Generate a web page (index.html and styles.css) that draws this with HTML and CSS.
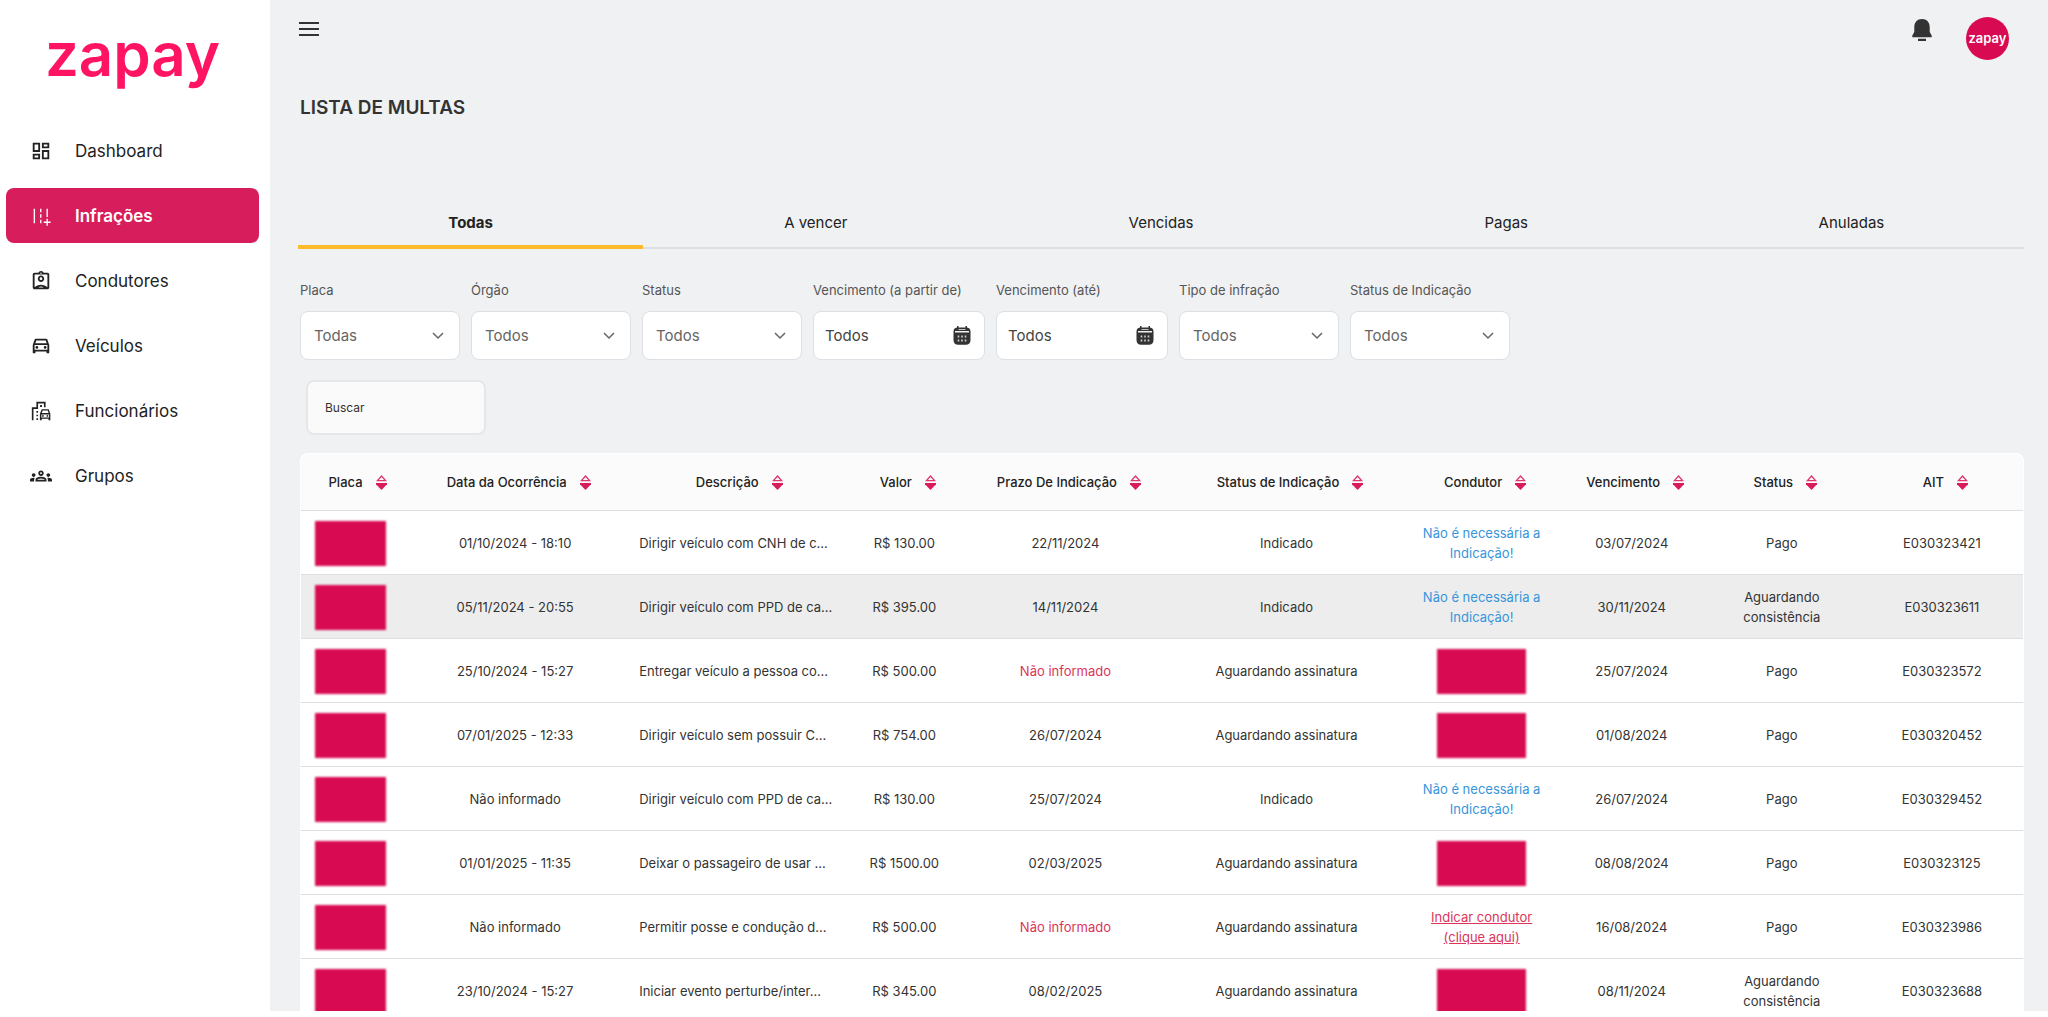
FILE: index.html
```html
<!DOCTYPE html>
<html lang="pt-BR">
<head>
<meta charset="utf-8">
<meta name="viewport" content="width=device-width, initial-scale=1">
<title>Zapay - Lista de multas</title>
<link rel="stylesheet" href="styles.css">
</head>
<body>
<svg class="sprite" aria-hidden="true">
  <symbol id="sort" viewBox="0 0 11 15"><path d="M5.500 1 9.700 5.700H1.300Z" fill="none" stroke="#e0366f" stroke-width="1.300"/><path d="M0 8h11v1.200L5.500 15 0 9.200Z" fill="#d81b5c"/></symbol>
  <symbol id="chevron" viewBox="0 0 12 8"><path d="m1 1 5 5 5-5" fill="none" stroke="#666" stroke-width="1.500"/></symbol>
  <symbol id="calendar" viewBox="0 0 18 19"><path fill="#333" d="M4 0h1.500v1.500h7V0H14v1.600c2.400.2 3.500 1.700 3.500 4V14c0 3-1.600 4.700-4.700 4.700H5.200C2.100 18.700.5 17 .5 14V5.600c0-2.300 1.100-3.800 3.500-4Z"/><path fill="#f0f1f3" d="M5.500 3h7v.8h-7ZM2 5h14v1.500H2Z"/><path fill="#ccc" d="M4.700 9.500h1.600v2H4.700Zm3.500 0h1.600v2H8.200Zm3.500 0h1.600v2h-1.600Zm-7 4h1.600v2H4.700Zm3.500 0h1.600v2H8.200Zm3.500 0h1.600v2h-1.600Z"/></symbol>
</svg>
<div class="app">
  <aside class="sidebar">
    <a class="logo" href="#">zapay</a>
    <nav class="menu">
      <a class="menu-item" href="#"><svg viewBox="0 0 24 24"><path d="M19 5v2h-4V5h4M9 5v6H5V5h4m10 8v6h-4v-6h4M9 17v2H5v-2h4M21 3h-8v6h8V3zM11 3H3v10h8V3zm10 8h-8v10h8V11zm-10 4H3v6h8v-6z"/></svg>Dashboard</a>
      <a class="menu-item active" href="#"><svg viewBox="0 0 24 24"><path d="M4 4h1.500v16H4zM11 4h1.500v4H11zm0 6h1.500v4H11zm0 6h1.500v4H11zM18 4h1.500v9H18zM18 15h1.500v3h3v1.500h-3v3H18v-3h-3V18h3z"/></svg>Infrações</a>
      <a class="menu-item" href="#"><svg viewBox="0 0 24 24"><path d="M19 3h-4.180C14.400 1.840 13.300 1 12 1s-2.400.84-2.820 2H5c-1.100 0-2 .9-2 2v14c0 1.100.9 2 2 2h14c1.100 0 2-.9 2-2V5c0-1.100-.9-2-2-2zm-7-.25c.41 0 .75.340.75.750s-.34.750-.75.750-.75-.34-.75-.75.34-.75.750-.75zM9.100 19c.85-.6 1.900-.95 2.900-.95s2.050.35 2.900.95H9.100zm9.900-.14c-1.770-1.720-4.240-2.790-7-2.790s-5.230 1.070-7 2.790V5h14v13.860zM12 6c-1.930 0-3.500 1.570-3.500 3.500S10.070 13 12 13s3.500-1.570 3.500-3.500S13.930 6 12 6zm0 5c-.83 0-1.500-.67-1.500-1.500S11.170 8 12 8s1.500.67 1.500 1.500S12.830 11 12 11z"/></svg>Condutores</a>
      <a class="menu-item" href="#"><svg viewBox="0 0 24 24"><path d="M18.920 5.010C18.720 4.420 18.160 4 17.500 4h-11c-.66 0-1.210.42-1.420 1.010L3 11v8c0 .55.450 1 1 1h1c.55 0 1-.45 1-1v-1h12v1c0 .55.450 1 1 1h1c.55 0 1-.45 1-1v-8l-2.080-5.990zM6.850 6h10.290l1.040 3H5.810l1.040-3zM19 16H5v-5h14v5z"/><circle cx="7.500" cy="13.500" r="1.500"/><circle cx="16.500" cy="13.500" r="1.500"/></svg>Veículos</a>
      <a class="menu-item" href="#"><svg viewBox="0 0 24 24"><path d="M2 22V8h5V2h10v6h-1.800V3.800H8.800v6h-5V22zM11 5.500h2v2h-2zM7 12h1.800v1.800H7zm0 4h1.800v1.800H7zm0 4h1.800v1.800H7z"/><path fill-rule="evenodd" d="m12.800 10h7.600l1.800 5v7h-2v-1.500h-7.400V22h-2v-7zm1 1.500-.9 2.700h7.400l-.9-2.700zM12.400 15.700v3.400h8.400v-3.400z"/><circle cx="14.100" cy="17.400" r="1"/><circle cx="19" cy="17.400" r="1"/></svg>Funcionários</a>
      <a class="menu-item" href="#"><svg viewBox="0 0 24 24"><path d="M4 13c1.100 0 2-.9 2-2s-.9-2-2-2-2 .9-2 2 .9 2 2 2zm1.130 1.100C4.760 14.040 4.390 14 4 14c-.99 0-1.930.21-2.780.58C.48 14.900 0 15.620 0 16.430V18h4.500v-1.610c0-.83.230-1.610.63-2.290zM20 13c1.100 0 2-.9 2-2s-.9-2-2-2-2 .9-2 2 .9 2 2 2zm4 3.430c0-.81-.48-1.530-1.220-1.850-.85-.37-1.790-.58-2.780-.58-.39 0-.76.040-1.130.1.400.68.630 1.460.63 2.290V18H24v-1.570zm-7.760-2.780c-1.170-.52-2.610-.9-4.240-.9s-3.070.39-4.240.9C6.680 14.130 6 15.210 6 16.390V18h12v-1.610c0-1.180-.68-2.260-1.760-2.740zM8.070 16c.09-.23.130-.39.910-.69.970-.38 1.990-.56 3.020-.56s2.050.18 3.020.56c.77.300.81.460.91.690H8.070zM12 8c.55 0 1 .45 1 1s-.45 1-1 1-1-.45-1-1 .45-1 1-1m0-2c-1.660 0-3 1.340-3 3s1.340 3 3 3 3-1.340 3-3-1.340-3-3-3z"/></svg>Grupos</a>
    </nav>
  </aside>

  <main class="content">
    <header class="topbar">
      <button class="icon-button burger" aria-label="Menu"><svg viewBox="0 0 20 14"><path d="M0 1h20M0 7h20M0 13h20" stroke="#333" stroke-width="2"/></svg></button>
      <div class="account">
        <button class="icon-button bell" aria-label="Notificações"><svg viewBox="0 0 20 22"><path fill="#333" d="M10 0c4.700 0 7.700 3.400 7.700 7.800V13l2 3.500v1.700H.3v-1.700l2-3.500V7.800C2.300 3.400 5.300 0 10 0ZM6 19.800h8V22H6Z"/></svg></button>
        <a class="avatar" href="#">zapay</a>
      </div>
    </header>

    <h1 class="title">LISTA DE MULTAS</h1>

    <div class="tabs" role="tablist">
      <button class="tab selected" role="tab" aria-selected="true">Todas</button>
      <button class="tab" role="tab">A vencer</button>
      <button class="tab" role="tab">Vencidas</button>
      <button class="tab" role="tab">Pagas</button>
      <button class="tab" role="tab">Anuladas</button>
    </div>

    <form class="filters">
      <div class="field"><label for="placa">Placa</label><div class="control"><select id="placa"><option>Todas</option></select><svg class="chevron"><use href="#chevron"/></svg></div></div>
      <div class="field"><label for="orgao">Órgão</label><div class="control"><select id="orgao"><option>Todos</option></select><svg class="chevron"><use href="#chevron"/></svg></div></div>
      <div class="field"><label for="status">Status</label><div class="control"><select id="status"><option>Todos</option></select><svg class="chevron"><use href="#chevron"/></svg></div></div>
      <div class="field date"><label for="de">Vencimento (a partir de)</label><div class="control"><input id="de" type="text" value="Todos"><svg class="calendar"><use href="#calendar"/></svg></div></div>
      <div class="field date"><label for="ate">Vencimento (até)</label><div class="control"><input id="ate" type="text" value="Todos"><svg class="calendar"><use href="#calendar"/></svg></div></div>
      <div class="field"><label for="tipo">Tipo de infração</label><div class="control"><select id="tipo"><option>Todos</option></select><svg class="chevron"><use href="#chevron"/></svg></div></div>
      <div class="field"><label for="indicacao">Status de Indicação</label><div class="control"><select id="indicacao"><option>Todos</option></select><svg class="chevron"><use href="#chevron"/></svg></div></div>
    </form>

    <input class="search" type="search" placeholder="Buscar" aria-label="Buscar">

    <div class="table-card">
      <table>
        <colgroup><col class="c-placa"><col class="c-data"><col class="c-desc"><col class="c-valor"><col class="c-prazo"><col class="c-sind"><col class="c-cond"><col class="c-venc"><col class="c-status"><col class="c-ait"></colgroup>
        <thead>
          <tr>
            <th><button>Placa<svg><use href="#sort"/></svg></button></th>
            <th><button>Data da Ocorrência<svg><use href="#sort"/></svg></button></th>
            <th><button>Descrição<svg><use href="#sort"/></svg></button></th>
            <th><button>Valor<svg><use href="#sort"/></svg></button></th>
            <th><button>Prazo De Indicação<svg><use href="#sort"/></svg></button></th>
            <th><button>Status de Indicação<svg><use href="#sort"/></svg></button></th>
            <th><button>Condutor<svg><use href="#sort"/></svg></button></th>
            <th><button>Vencimento<svg><use href="#sort"/></svg></button></th>
            <th><button>Status<svg><use href="#sort"/></svg></button></th>
            <th><button>AIT<svg><use href="#sort"/></svg></button></th>
          </tr>
        </thead>
        <tbody>
          <tr><td class="plate"><span class="mask"></span></td><td>01/10/2024 - 18:10</td><td class="desc">Dirigir veículo com CNH de c...</td><td>R$ 130.00</td><td>22/11/2024</td><td>Indicado</td><td class="info">Não é necessária a<br>Indicação!</td><td>03/07/2024</td><td>Pago</td><td>E030323421</td></tr>
          <tr class="highlight"><td class="plate"><span class="mask"></span></td><td>05/11/2024 - 20:55</td><td class="desc">Dirigir veículo com PPD de ca...</td><td>R$ 395.00</td><td>14/11/2024</td><td>Indicado</td><td class="info">Não é necessária a<br>Indicação!</td><td>30/11/2024</td><td>Aguardando<br>consistência</td><td>E030323611</td></tr>
          <tr><td class="plate"><span class="mask"></span></td><td>25/10/2024 - 15:27</td><td class="desc">Entregar veículo a pessoa co...</td><td>R$ 500.00</td><td class="missing">Não informado</td><td>Aguardando assinatura</td><td><span class="mask wide"></span></td><td>25/07/2024</td><td>Pago</td><td>E030323572</td></tr>
          <tr><td class="plate"><span class="mask"></span></td><td>07/01/2025 - 12:33</td><td class="desc">Dirigir veículo sem possuir C...</td><td>R$ 754.00</td><td>26/07/2024</td><td>Aguardando assinatura</td><td><span class="mask wide"></span></td><td>01/08/2024</td><td>Pago</td><td>E030320452</td></tr>
          <tr><td class="plate"><span class="mask"></span></td><td>Não informado</td><td class="desc">Dirigir veículo com PPD de ca...</td><td>R$ 130.00</td><td>25/07/2024</td><td>Indicado</td><td class="info">Não é necessária a<br>Indicação!</td><td>26/07/2024</td><td>Pago</td><td>E030329452</td></tr>
          <tr><td class="plate"><span class="mask"></span></td><td>01/01/2025 - 11:35</td><td class="desc">Deixar o passageiro de usar ...</td><td>R$ 1500.00</td><td>02/03/2025</td><td>Aguardando assinatura</td><td><span class="mask wide"></span></td><td>08/08/2024</td><td>Pago</td><td>E030323125</td></tr>
          <tr><td class="plate"><span class="mask"></span></td><td>Não informado</td><td class="desc">Permitir posse e condução d...</td><td>R$ 500.00</td><td class="missing">Não informado</td><td>Aguardando assinatura</td><td class="missing"><a href="#">Indicar condutor<br>(clique aqui)</a></td><td>16/08/2024</td><td>Pago</td><td>E030323986</td></tr>
          <tr><td class="plate"><span class="mask"></span></td><td>23/10/2024 - 15:27</td><td class="desc">Iniciar evento perturbe/inter...</td><td>R$ 345.00</td><td>08/02/2025</td><td>Aguardando assinatura</td><td><span class="mask wide"></span></td><td>08/11/2024</td><td>Aguardando<br>consistência</td><td>E030323688</td></tr>
        </tbody>
      </table>
    </div>
  </main>
</div>
</body>
</html>
```
FILE: styles.css
```css
* { box-sizing: border-box; }

body {
  margin: 0;
  background: #fff;
  color: #333;
  font-family: Inter, "Liberation Sans", sans-serif;
  font-size: 13px;
  line-height: 20px;
}

button, input, select {
  font: inherit;
  color: inherit;
  border: 0;
  background: none;
  padding: 0;
}

a { color: inherit; text-decoration: none; }
svg { display: block; flex: none; }
.sprite { display: none; }

.app {
  display: flex;
  height: 100vh;
  padding-bottom: 6px;
}

/* Sidebar */
.sidebar { flex: none; width: 270px; background: #fff; }

.logo {
  display: block;
  height: 123px;
  padding-top: 22px;
  padding-right: 5px;
  text-align: center;
  color: #ff1463;
  font-size: 60px;
  font-weight: 600;
  line-height: 64px;
}

.menu {
  display: flex;
  flex-direction: column;
  gap: 10px;
  padding: 0 11px 0 6px;
}

.menu-item {
  display: flex;
  align-items: center;
  gap: 23px;
  height: 55px;
  padding-left: 24px;
  border-radius: 8px;
  color: #222;
  font-size: 17px;
}

.menu-item svg { width: 22px; height: 22px; fill: currentColor; }
.menu-item.active { background: #d81d5d; color: #fff; font-weight: 600; }

/* Main area */
.content {
  flex: 1;
  min-width: 0;
  padding: 0 24px 0 28px;
  overflow: hidden;
  background: #f0f1f3;
}

.topbar {
  display: flex;
  justify-content: space-between;
  align-items: flex-start;
  height: 96px;
  padding: 17px 15px 0 1px;
}

.account { display: flex; gap: 34px; }
.icon-button { cursor: pointer; }
.burger { padding-top: 5px; }
.burger svg { width: 20px; height: 14px; }
.bell { align-self: flex-start; padding-top: 2px; }
.bell svg { width: 20px; height: 22px; }

.avatar {
  display: block;
  width: 43px;
  height: 43px;
  border-radius: 50%;
  background: #d80b52;
  color: #fff;
  font-weight: 600;
  line-height: 42px;
  text-align: center;
}

.title {
  margin: 0 0 0 2px;
  font-size: 19px;
  font-weight: 600;
  line-height: 24px;
}

.tabs {
  display: flex;
  height: 49px;
  margin-top: 80px;
  box-shadow: inset 0 -2px #dcdfe3;
}

.tab {
  flex: 1;
  border-bottom: 4px solid transparent;
  color: #222;
  font-size: 15px;
}

.tab.selected { border-color: #ffbb2b; font-weight: 700; }

/* Filters */
.filters {
  display: flex;
  flex-wrap: wrap;
  gap: 11px;
  margin: 31px 0 0 2px;
}

.field { width: 160px; }
.field.date { width: 172px; }

.field label {
  display: block;
  margin-bottom: 11px;
  color: #555;
  white-space: nowrap;
}

.control { display: grid; align-items: center; }
.control > * { grid-area: 1 / 1; }

.control select,
.control input {
  width: 100%;
  height: 49px;
  padding: 0 13px;
  border: 1px solid #dcdfe3;
  border-radius: 8px;
  background: #fff;
  color: #666;
  font-size: 15px;
  appearance: none;
}

.control input { padding: 0 11px; color: #444; }
.control svg { justify-self: end; pointer-events: none; }
.chevron { width: 12px; height: 8px; margin-right: 16px; }
.calendar { width: 18px; height: 19px; margin-right: 14px; }

.search {
  display: block;
  width: 180px;
  height: 55px;
  margin: 20px 0 0 8px;
  padding: 0 17px;
  border: 2px solid #e5e7ea;
  border-radius: 8px;
  background: #fafafa;
  font-size: 12px;
}

.search::placeholder { color: #333; opacity: 1; }

/* Table */
.table-card {
  margin: 18px 0 0 2px;
  padding: 1px;
  border-radius: 8px 8px 0 0;
  background: #fff;
}

table {
  width: 100%;
  border-collapse: separate;
  border-spacing: 0;
  table-layout: fixed;
}

.c-placa { width: 106px; }
.c-data { width: 216px; }
.c-desc { width: 225px; }
.c-valor { width: 112px; }
.c-prazo { width: 210px; }
.c-sind { width: 232px; }
.c-cond { width: 158px; }
.c-venc { width: 142px; }
.c-status { width: 158px; }
.c-ait { width: 162px; }

th, td {
  padding: 0;
  border-bottom: 1px solid #dddfe1;
  text-align: center;
  white-space: nowrap;
}

th {
  height: 57px;
  padding-left: 7px;
  background: #fbfbfb;
  color: #222;
}

th:first-child { border-top-left-radius: 8px; }
th:last-child { border-top-right-radius: 8px; }

th button {
  display: inline-flex;
  align-items: center;
  gap: 13px;
  font-weight: 500;
}

th svg { width: 11px; height: 15px; }

td { height: 64px; }
.highlight { background: #ededed; }
.desc { padding-left: 16px; text-align: left; }
.info { color: #3795dc; }
.missing { color: #dc3558; }
.missing a { text-decoration: underline; }

.mask {
  display: block;
  width: 71px;
  height: 45px;
  margin: 2px auto 0;
  background: #d80b52;
  filter: blur(1px);
}

.mask.wide { width: 89px; }
.plate { padding-right: 8px; }
```
